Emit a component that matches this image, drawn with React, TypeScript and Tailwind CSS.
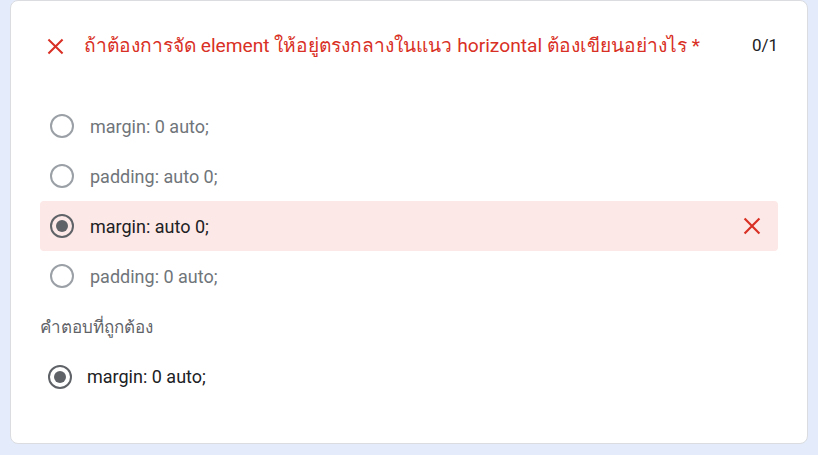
import React from "react";

const XMark = ({ size = 18 }: { size?: number }) => (
  <svg width={size} height={size} viewBox="0 0 24 24" fill="none">
    <path d="M4 4 L20 20 M20 4 L4 20" stroke="#d93025" strokeWidth="2.6" strokeLinecap="square" />
  </svg>
);

const Radio = ({ checked }: { checked?: boolean }) => (
  <div
    className={
      "w-6 h-6 rounded-full border-2 flex items-center justify-center shrink-0 " +
      (checked ? "border-[#5f6368]" : "border-[#9aa0a6]")
    }
  >
    {checked && <div className="w-3 h-3 rounded-full bg-[#5f6368]" />}
  </div>
);

const options = [
  { label: "margin: 0 auto;", wrong: false },
  { label: "padding: auto 0;", wrong: false },
  { label: "margin: auto 0;", wrong: true },
  { label: "padding: 0 auto;", wrong: false },
];

export default function App() {
  return (
    <div
      className="w-[818px] h-[455px] bg-[#e4ecfb] px-[10px] pb-3"
      style={{ fontFamily: "Roboto, 'Noto Sans', sans-serif" }}
    >
      <div className="bg-white rounded-lg border border-[#dadce0] h-[444px] pt-[33px] px-[29px]">
        <div className="flex items-center h-6">
          <div className="w-[44px] flex items-center pl-[6px]">
            <XMark size={19} />
          </div>
          <div className="flex-1 text-[19.2px] text-[#d93025] leading-6 whitespace-nowrap">
            ถ้าต้องการจัด element ให้อยู่ตรงกลางในแนว horizontal ต้องเขียนอย่างไร *
          </div>
          <div className="text-[17px] text-[#202124] pl-4">0/1</div>
        </div>

        <div className="mt-[43px]">
          {options.map((o) => (
            <div
              key={o.label}
              className={
                "flex items-center h-[50px] pl-[10px] pr-4 rounded " + (o.wrong ? "bg-[#fce8e6]" : "")
              }
            >
              <Radio checked={o.wrong} />
              <div
                className={
                  "ml-4 flex-1 text-[18px] " + (o.wrong ? "text-[#202124]" : "text-[#70757a]")
                }
              >
                {o.label}
              </div>
              {o.wrong && <XMark size={20} />}
            </div>
          ))}
        </div>

        <div className="mt-[14px] text-[17px] text-[#5f6368] leading-6">คำตอบที่ถูกต้อง</div>
        <div className="flex items-center pl-2 mt-6">
          <Radio checked />
          <div className="ml-[15px] text-[18px] text-[#202124]">margin: 0 auto;</div>
        </div>
      </div>
    </div>
  );
}
